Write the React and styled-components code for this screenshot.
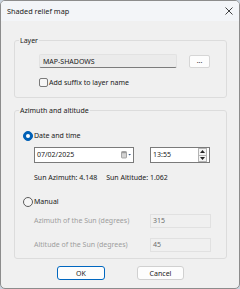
import React from "react";
import styled, { createGlobalStyle } from "styled-components";

const Global = createGlobalStyle`
  html, body { margin: 0; padding: 0; background: #c9d3de; }
  body { font-family: "Noto Sans", "Open Sans", sans-serif; }
  * { box-sizing: border-box; }
`;

const Window = styled.div`
  width: 240px;
  height: 289px;
  border: 1px solid #8c8c8c;
  border-radius: 5px;
  background: #f0f0f0;
  overflow: hidden;
  display: flex;
  flex-direction: column;
  font-size: 7px;
  color: #1a1a1a;
`;

const TitleBar = styled.div`
  height: 20px;
  flex: none;
  display: flex;
  align-items: center;
  justify-content: space-between;
  padding: 0 6px 0 6px;
  background: #f3f5f8;
`;

const Title = styled.span`
  font-size: 7.3px;
  color: #1b1b1b;
`;

const CloseIcon = () => (
  <svg width="8" height="8" viewBox="0 0 8 8">
    <path d="M0.5 0.5 L7.5 7.5 M7.5 0.5 L0.5 7.5" stroke="#2b2b2b" strokeWidth="0.9" fill="none" />
  </svg>
);

const Body = styled.div`
  padding: 14px 12px 0 13px;
  display: flex;
  flex-direction: column;
`;

const Group = styled.fieldset`
  margin: 0;
  padding: 0;
  border: 1px solid #dcdcdc;
  border-radius: 3px;
  min-width: 0;
  & + & {
    margin-top: 7px;
  }
`;

const Legend = styled.legend`
  margin-left: 4px;
  padding: 0 1px;
  height: 11px;
  line-height: 11px;
  font-size: 7px;
  color: #1a1a1a;
`;

const GroupBody = styled.div`
  display: flex;
  flex-direction: column;
  padding: ${(p) => p.$pad};
`;

const Row = styled.div`
  display: flex;
  align-items: center;
  height: ${(p) => p.$h}px;
  margin-top: ${(p) => p.$mt || 0}px;
  padding-left: ${(p) => p.$indent || 0}px;
  gap: ${(p) => p.$gap || 0}px;
`;

const NameField = styled.div`
  width: 138px;
  height: 14px;
  background: #ebebeb;
  border: 1px solid #e2e2e2;
  border-bottom: 1px solid #7c7c7c;
  border-radius: 2px;
  padding-left: 3px;
  display: flex;
  align-items: center;
  color: #1a1a1a;
`;

const SmallButton = styled.div`
  width: 21px;
  height: 13px;
  margin-left: 12px;
  background: #fdfdfd;
  border: 1px solid #d6d6d6;
  border-radius: 2px;
  display: flex;
  align-items: center;
  justify-content: center;
  font-size: 7px;
  color: #333;
  padding-bottom: 2px;
`;

const Checkbox = styled.span`
  width: 9px;
  height: 9px;
  border: 1px solid #7a7a7a;
  border-radius: 2px;
  background: #f6f6f6;
  flex: none;
`;

const Label = styled.span`
  margin-left: ${(p) => p.$ml || 0}px;
  color: ${(p) => (p.$disabled ? "#9d9d9d" : "#1a1a1a")};
  white-space: nowrap;
  line-height: 10px;
`;

const Radio = styled.span`
  width: 10px;
  height: 10px;
  border-radius: 50%;
  flex: none;
  display: flex;
  align-items: center;
  justify-content: center;
  background: ${(p) => (p.$checked ? "#0060b6" : "#f6f6f6")};
  border: 1px solid ${(p) => (p.$checked ? "#0060b6" : "#5c5c5c")};
  &::after {
    content: "";
    display: ${(p) => (p.$checked ? "block" : "none")};
    width: 4px;
    height: 4px;
    border-radius: 50%;
    background: #ffffff;
  }
`;

const Input = styled.div`
  width: ${(p) => p.$w}px;
  height: ${(p) => p.$h}px;
  margin-left: ${(p) => p.$ml || 0}px;
  background: ${(p) => (p.$disabled ? "#f0f0f0" : "#ffffff")};
  border: 1px solid ${(p) => (p.$disabled ? "#e1e1e1" : "#7a7a7a")};
  display: flex;
  align-items: center;
  padding-left: 2px;
  padding-right: 1px;
  color: ${(p) => (p.$disabled ? "#6d6d6d" : "#1a1a1a")};
  flex: none;
`;

const InputText = styled.span`
  flex: 1;
  line-height: 10px;
`;

const CalendarIcon = () => (
  <svg width="11" height="8" viewBox="0 0 11 8">
    <rect x="0.5" y="0.5" width="5" height="6.5" rx="0.8" fill="#d3d3d3" stroke="#8a8a8a" strokeWidth="0.7" />
    <rect x="0.8" y="0.8" width="4.4" height="1.4" fill="#9a9a9a" />
    <path d="M7.3 3 L10 3 L8.65 4.6 Z" fill="#3d5a86" />
  </svg>
);

const Spinner = styled.div`
  width: 9px;
  height: 14px;
  display: flex;
  flex-direction: column;
  gap: 0;
  margin-right: 1px;
`;

const SpinHalf = styled.div`
  flex: 1;
  border: 1px solid #b4b4b4;
  background: #f4f4f4;
  display: flex;
  align-items: center;
  justify-content: center;
  & + & {
    border-top: none;
  }
`;

const Arrow = ({ up }) => (
  <svg width="5" height="3" viewBox="0 0 5 3">
    <path d={up ? "M0 3 L5 3 L2.5 0 Z" : "M0 0 L5 0 L2.5 3 Z"} fill="#222" />
  </svg>
);

const ParamLabel = styled.span`
  width: 116px;
  color: #9d9d9d;
  white-space: nowrap;
  line-height: 10px;
`;

const ButtonBar = styled.div`
  display: flex;
  justify-content: center;
  gap: 32px;
  margin-top: 7px;
`;

const Button = styled.div`
  width: ${(p) => p.$w}px;
  height: 14px;
  background: #fdfdfd;
  border: ${(p) => (p.$default ? "1.5px solid #0067c0" : "1px solid #d0d0d0")};
  border-radius: 3px;
  display: flex;
  align-items: center;
  justify-content: center;
  color: #1a1a1a;
`;

export default function App() {
  return (
    <>
      <Global />
      <Window>
        <TitleBar>
          <Title>Shaded relief map</Title>
          <CloseIcon />
        </TitleBar>
        <Body>
          <Group>
            <Legend>Layer</Legend>
            <GroupBody $pad="8px 0 10px 24px">
              <Row $h={14}>
                <NameField>MAP-SHADOWS</NameField>
                <SmallButton>...</SmallButton>
              </Row>
              <Row $h={9} $mt={10}>
                <Checkbox />
                <Label $ml={1}>Add suffix to layer name</Label>
              </Row>
            </GroupBody>
          </Group>
          <Group>
            <Legend>Azimuth and altitude</Legend>
            <GroupBody $pad="15px 0 6px 0">
              <Row $h={10} $indent={8}>
                <Radio $checked />
                <Label $ml={1}>Date and time</Label>
              </Row>
              <Row $h={16} $mt={6} $indent={19}>
                <Input $w={100} $h={16}>
                  <InputText>07/02/2025</InputText>
                  <CalendarIcon />
                </Input>
                <Input $w={60} $h={16} $ml={16}>
                  <InputText>13:55</InputText>
                  <Spinner>
                    <SpinHalf>
                      <Arrow up />
                    </SpinHalf>
                    <SpinHalf>
                      <Arrow />
                    </SpinHalf>
                  </Spinner>
                </Input>
              </Row>
              <Row $h={10} $mt={10} $indent={19} $gap={9}>
                <Label>Sun Azimuth: 4.148</Label>
                <Label>Sun Altitude: 1.062</Label>
              </Row>
              <Row $h={10} $mt={14} $indent={8}>
                <Radio />
                <Label $ml={1}>Manual</Label>
              </Row>
              <Row $h={14} $mt={7} $indent={19}>
                <ParamLabel>Azimuth of the Sun (degrees)</ParamLabel>
                <Input $w={61} $h={14} $disabled>
                  <InputText>315</InputText>
                </Input>
              </Row>
              <Row $h={14} $mt={10} $indent={19}>
                <ParamLabel>Altitude of the Sun (degrees)</ParamLabel>
                <Input $w={61} $h={14} $disabled>
                  <InputText>45</InputText>
                </Input>
              </Row>
            </GroupBody>
          </Group>
          <ButtonBar>
            <Button $w={48} $default>OK</Button>
            <Button $w={47}>Cancel</Button>
          </ButtonBar>
        </Body>
      </Window>
    </>
  );
}
